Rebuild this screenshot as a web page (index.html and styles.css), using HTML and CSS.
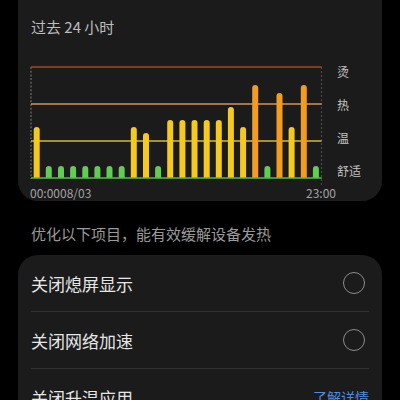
FILE: index.html
```html
<!DOCTYPE html>
<html lang="zh-CN">
<head>
<meta charset="utf-8">
<link rel="stylesheet" href="styles.css">
</head>
<body>
<div class="page">
  <section class="card chart-card">
    <div class="title">过去 24 小时</div>
    <div class="chart">
      <svg class="plot" width="292" height="124" viewBox="0 0 292 124">
        <line x1="1" y1="5" x2="1" y2="117" class="axis-l"/>
        <line x1="291.7" y1="5" x2="291.7" y2="124" class="axis-r"/>
        <line x1="1" y1="5" x2="291.7" y2="5" stroke="#a9452d" stroke-width="1.5"/>
        <line x1="1" y1="42" x2="291.7" y2="42" stroke="#d99458" stroke-width="1.5"/>
        <line x1="1" y1="79" x2="291.7" y2="79" stroke="#d6b83c" stroke-width="1.5"/>
        <g class="y">
          <path d="M3.7 116V68a3 3 0 0 1 6 0V116Z"/>
          <path d="M100.8 116V68a3 3 0 0 1 6 0V116Z"/>
          <path d="M113 116V74a3 3 0 0 1 6 0V116Z"/>
          <path d="M137.2 116V61a3 3 0 0 1 6 0V116Z"/>
          <path d="M149.4 116V61a3 3 0 0 1 6 0V116Z"/>
          <path d="M161.5 116V61a3 3 0 0 1 6 0V116Z"/>
          <path d="M173.7 116V61a3 3 0 0 1 6 0V116Z"/>
          <path d="M185.8 116V61a3 3 0 0 1 6 0V116Z"/>
          <path d="M197.9 116V48a3 3 0 0 1 6 0V116Z"/>
          <path d="M210.1 116V68a3 3 0 0 1 6 0V116Z"/>
          <path d="M258.6 116V68a3 3 0 0 1 6 0V116Z"/>
        </g>
        <g class="g">
          <path d="M15.8 116V107a3 3 0 0 1 6 0V116Z"/>
          <path d="M28 116V107a3 3 0 0 1 6 0V116Z"/>
          <path d="M40.1 116V107a3 3 0 0 1 6 0V116Z"/>
          <path d="M52.3 116V107a3 3 0 0 1 6 0V116Z"/>
          <path d="M64.4 116V107a3 3 0 0 1 6 0V116Z"/>
          <path d="M76.5 116V107a3 3 0 0 1 6 0V116Z"/>
          <path d="M88.7 116V107a3 3 0 0 1 6 0V116Z"/>
          <path d="M125.1 116V107a3 3 0 0 1 6 0V116Z"/>
          <path d="M234.4 116V107a3 3 0 0 1 6 0V116Z"/>
          <path d="M282.9 116V107a3 3 0 0 1 6 0V116Z"/>
        </g>
        <g class="o">
          <path d="M222.2 116V26a3 3 0 0 1 6 0V116Z"/>
          <path d="M246.5 116V34a3 3 0 0 1 6 0V116Z"/>
          <path d="M270.8 116V26a3 3 0 0 1 6 0V116Z"/>
        </g>
        <line x1="1" y1="116" x2="291.7" y2="116" stroke="#5cba4e" stroke-width="1.5"/>
      </svg>
      <div class="ylabels">
        <span>烫</span>
        <span>热</span>
        <span>温</span>
        <span>舒适</span>
      </div>
      <div class="xlabels">
        <span>00:0008/03</span>
        <span>23:00</span>
      </div>
    </div>
  </section>

  <p class="hint">优化以下项目，能有效缓解设备发热</p>

  <section class="card list-card">
    <div class="row">
      <span class="label">关闭熄屏显示</span>
      <span class="radio"></span>
    </div>
    <div class="row">
      <span class="label">关闭网络加速</span>
      <span class="radio"></span>
    </div>
    <div class="row">
      <span class="label">关闭升温应用</span>
      <span class="link">了解详情</span>
    </div>
  </section>
</div>
</body>
</html>
```

FILE: styles.css
```css
* { box-sizing: border-box; }
html, body {
  margin: 0;
  background: #000;
}
body {
  font-family: "Noto Sans CJK SC", "Noto Sans", sans-serif;
  overflow: hidden;
  height: 400px;
}
.page {
  padding: 0 18px;
}
.card {
  background: #1b1b1b;
  border-radius: 20px;
}
.chart-card {
  margin-top: -20px;
  padding: 37px 0 1px 12px;
}
.title {
  font-size: 15px;
  line-height: 20px;
  color: #bdbdbd;
  padding-left: 1px;
}
.chart {
  margin-top: 25px;
  display: grid;
  grid-template-columns: 292px 1fr;
}
.plot {
  display: block;
}
.axis-l {
  stroke: #4d4d4d;
  stroke-width: 2;
  stroke-dasharray: 2 1.7;
}
.axis-r {
  stroke: #5a5a5a;
  stroke-width: 1;
  stroke-dasharray: 2 2;
}
.y path { fill: #f4ca1c; }
.g path { fill: #62cc55; }
.o path { fill: #f39c20; }
.ylabels {
  display: flex;
  flex-direction: column;
  gap: 17px;
  padding: 2px 0 0 15px;
  font-size: 12px;
  line-height: 16px;
  color: #c4c4c4;
}
.xlabels {
  grid-column: 1 / 3;
  width: 306px;
  display: flex;
  justify-content: space-between;
  font-size: 12px;
  line-height: 14px;
  color: #a3a3a3;
}
.hint {
  margin: 23px 0 11px;
  padding-left: 13px;
  font-size: 15px;
  line-height: 20px;
  color: #9a9a9a;
}
.list-card {
  padding: 0 13px;
}
.row {
  display: flex;
  align-items: center;
  justify-content: space-between;
  height: 57px;
  border-bottom: 1px solid #303030;
}
.label {
  font-size: 17px;
  color: #e6e6e6;
}
.radio {
  width: 22px;
  height: 22px;
  border-radius: 50%;
  border: 1.5px solid #8c8c8c;
  margin-right: 4px;
}
.link {
  font-size: 14px;
  color: #4e8de2;
}
```
